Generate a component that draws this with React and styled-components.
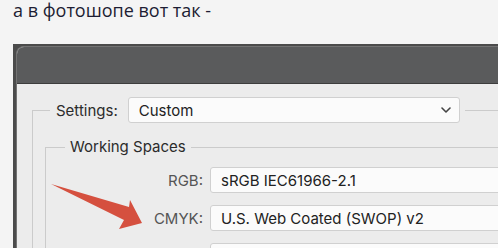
import styled, { createGlobalStyle } from "styled-components";

const GlobalStyle = createGlobalStyle`
  html, body {
    margin: 0;
    width: 498px;
    height: 248px;
    overflow: hidden;
    background: #f4f4f4;
  }
`;

const Page = styled.div`
  position: relative;
  width: 498px;
  height: 248px;
  overflow: hidden;
`;

const Caption = styled.div`
  padding: 1px 0 0 13px;
  font-family: "Open Sans", "DejaVu Sans", sans-serif;
  font-size: 18px;
  line-height: 19px;
  color: #1d1d33;
`;

const Frame = styled.div`
  margin: 24px 0 0 13px;
  width: 620px;
  height: 260px;
  background: #4b4b4b;
  padding: 2px 0 0 3px;
  box-sizing: border-box;
`;

const Window = styled.div`
  height: 100%;
  border-top-left-radius: 8px;
  border: 1px solid #737373;
  border-right: none;
  border-bottom: none;
  background: #ececec;
  overflow: hidden;
  font-family: "Inter", "Noto Sans", sans-serif;
`;

const TitleBar = styled.div`
  height: 36px;
  background: #5a5b5c;
  border-bottom: 1px solid #3d3d3d;
`;

const Content = styled.div`
  padding: 13px 0 0 15px;
`;

const Group = styled.fieldset`
  margin: 0;
  padding: 0 0 0 12px;
  border: 1px solid #cbcbcb;
  border-right: none;
  border-bottom: none;
  min-width: 0;
`;

const GroupLegend = styled.legend`
  margin-left: 5px;
  padding: 0 5px 0 6px;
  display: flex;
  align-items: center;
  gap: 10px;
`;

const Label = styled.span`
  font-size: 15px;
  color: ${(p) => (p.$muted ? "#555555" : "#2b2b2b")};
  text-align: ${(p) => (p.$right ? "right" : "left")};
`;

const Box = styled.div`
  box-sizing: border-box;
  height: 26px;
  width: ${(p) => p.$width || "auto"};
  display: flex;
  align-items: center;
  justify-content: space-between;
  padding: 0 8px 0 10px;
  background: #fbfbfb;
  border: 1px solid #d0d0d0;
  border-radius: 3px;
  font-size: 15px;
  color: #222;
  white-space: nowrap;
`;

const SubGroup = styled.fieldset`
  margin: 15px 0 0 0;
  padding: 0;
  border: 1px solid #cbcbcb;
  border-right: none;
  border-bottom: none;
  min-width: 0;
`;

const SubLegend = styled.legend`
  margin-left: 19px;
  padding: 0 5px;
  font-size: 15px;
  line-height: 18px;
  color: #2b2b2b;
`;

const FieldGrid = styled.div`
  display: grid;
  grid-template-columns: 157px 400px;
  grid-auto-rows: 26px;
  column-gap: 7px;
  row-gap: 12px;
  margin-top: 11px;
  align-items: center;
`;

const ArrowMark = styled.svg`
  position: absolute;
  left: 0;
  top: 0;
  pointer-events: none;
`;

function Chevron() {
  return (
    <svg width="10" height="6" viewBox="0 0 10 6">
      <path d="M1 1 L5 5 L9 1" fill="none" stroke="#444" strokeWidth="1.6" strokeLinecap="round" strokeLinejoin="round" />
    </svg>
  );
}

// third row only shows the top edge of its box in the crop
const spaces = [
  ["RGB:", "sRGB IEC61966-2.1"],
  ["CMYK:", "U.S. Web Coated (SWOP) v2"],
  ["", ""],
];

export default function App() {
  return (
    <Page>
      <GlobalStyle />
      <Caption>а в фотошопе вот так -</Caption>
      <Frame>
        <Window>
          <TitleBar />
          <Content>
            <Group>
              <GroupLegend>
                <Label>Settings:</Label>
                <Box $width="332px">
                  Custom
                  <Chevron />
                </Box>
              </GroupLegend>
              <SubGroup>
                <SubLegend>Working Spaces</SubLegend>
                <FieldGrid>
                  {spaces.map(([name, value], i) => [
                    <Label key={`l${i}`} $muted $right>
                      {name}
                    </Label>,
                    <Box key={`b${i}`}>{value}</Box>,
                  ])}
                </FieldGrid>
              </SubGroup>
            </Group>
          </Content>
        </Window>
      </Frame>
      <ArrowMark width="498" height="248" viewBox="0 0 498 248">
        <polygon points="51,184 129,207 130,200 142,223 119,229 124,220" fill="#d5503f" />
      </ArrowMark>
    </Page>
  );
}
